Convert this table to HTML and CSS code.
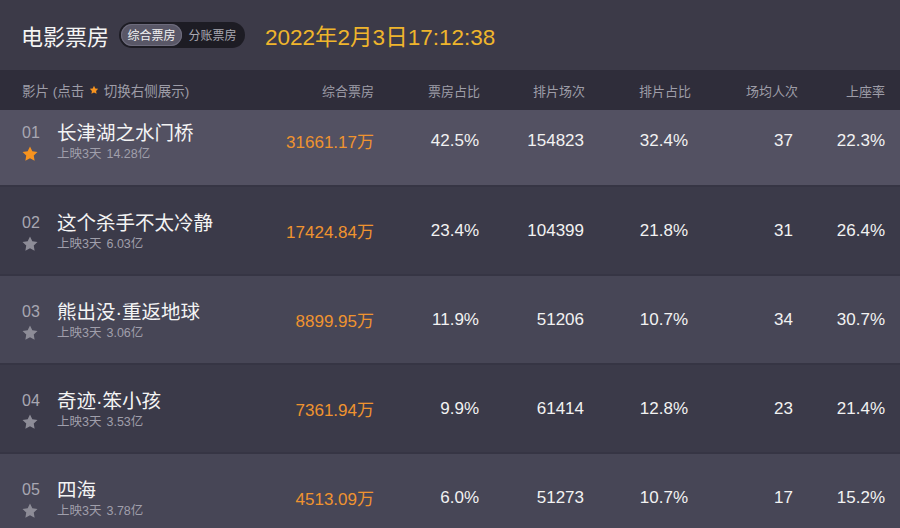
FILE: index.html
```html
<!DOCTYPE html>
<html lang="zh">
<head>
<meta charset="utf-8">
<link rel="stylesheet" href="styles.css">
</head>
<body>
<div class="page">
  <header class="top">
    <h1 class="title">电影票房</h1>
    <div class="toggle">
      <span class="seg active">综合票房</span>
      <span class="seg">分账票房</span>
    </div>
    <div class="date">2022年2月3日17:12:38</div>
  </header>

  <div class="thead grid">
    <div class="h-film">影片 (点击 <svg class="hstar" viewBox="0 0 24 24"><path d="M12 2l3.09 6.26L22 9.27l-5 4.87 1.18 6.88L12 17.77l-6.18 3.25L7 14.14 2 9.27l6.91-1.01z"/></svg> 切换右侧展示)</div>
    <div class="c">综合票房</div>
    <div class="c">票房占比</div>
    <div class="c">排片场次</div>
    <div class="c">排片占比</div>
    <div class="c">场均人次</div>
    <div class="c">上座率</div>
  </div>

  <div class="rows">
    <div class="row grid first">
      <div class="film">
        <div class="rank"><span class="no">01</span><svg class="star on" viewBox="0 0 24 24"><path d="M12 2l3.09 6.26L22 9.27l-5 4.87 1.18 6.88L12 17.77l-6.18 3.25L7 14.14 2 9.27l6.91-1.01z"/></svg></div>
        <div class="info"><div class="name">长津湖之水门桥</div><div class="sub"><span>上映3天</span><span>14.28亿</span></div></div>
      </div>
      <div class="v box">31661.17万</div>
      <div class="v">42.5%</div>
      <div class="v">154823</div>
      <div class="v">32.4%</div>
      <div class="v">37</div>
      <div class="v">22.3%</div>
    </div>
    <div class="row grid dark">
      <div class="film">
        <div class="rank"><span class="no">02</span><svg class="star" viewBox="0 0 24 24"><path d="M12 2l3.09 6.26L22 9.27l-5 4.87 1.18 6.88L12 17.77l-6.18 3.25L7 14.14 2 9.27l6.91-1.01z"/></svg></div>
        <div class="info"><div class="name">这个杀手不太冷静</div><div class="sub"><span>上映3天</span><span>6.03亿</span></div></div>
      </div>
      <div class="v box">17424.84万</div>
      <div class="v">23.4%</div>
      <div class="v">104399</div>
      <div class="v">21.8%</div>
      <div class="v">31</div>
      <div class="v">26.4%</div>
    </div>
    <div class="row grid light">
      <div class="film">
        <div class="rank"><span class="no">03</span><svg class="star" viewBox="0 0 24 24"><path d="M12 2l3.09 6.26L22 9.27l-5 4.87 1.18 6.88L12 17.77l-6.18 3.25L7 14.14 2 9.27l6.91-1.01z"/></svg></div>
        <div class="info"><div class="name">熊出没·重返地球</div><div class="sub"><span>上映3天</span><span>3.06亿</span></div></div>
      </div>
      <div class="v box">8899.95万</div>
      <div class="v">11.9%</div>
      <div class="v">51206</div>
      <div class="v">10.7%</div>
      <div class="v">34</div>
      <div class="v">30.7%</div>
    </div>
    <div class="row grid dark">
      <div class="film">
        <div class="rank"><span class="no">04</span><svg class="star" viewBox="0 0 24 24"><path d="M12 2l3.09 6.26L22 9.27l-5 4.87 1.18 6.88L12 17.77l-6.18 3.25L7 14.14 2 9.27l6.91-1.01z"/></svg></div>
        <div class="info"><div class="name">奇迹·笨小孩</div><div class="sub"><span>上映3天</span><span>3.53亿</span></div></div>
      </div>
      <div class="v box">7361.94万</div>
      <div class="v">9.9%</div>
      <div class="v">61414</div>
      <div class="v">12.8%</div>
      <div class="v">23</div>
      <div class="v">21.4%</div>
    </div>
    <div class="row grid light">
      <div class="film">
        <div class="rank"><span class="no">05</span><svg class="star" viewBox="0 0 24 24"><path d="M12 2l3.09 6.26L22 9.27l-5 4.87 1.18 6.88L12 17.77l-6.18 3.25L7 14.14 2 9.27l6.91-1.01z"/></svg></div>
        <div class="info"><div class="name">四海</div><div class="sub"><span>上映3天</span><span>3.78亿</span></div></div>
      </div>
      <div class="v box">4513.09万</div>
      <div class="v">6.0%</div>
      <div class="v">51273</div>
      <div class="v">10.7%</div>
      <div class="v">17</div>
      <div class="v">15.2%</div>
    </div>
  </div>
</div>
</body>
</html>
```

FILE: styles.css
```css
* { box-sizing: border-box; }
html, body {
  margin: 0;
  padding: 0;
  background: #3c3a48;
}
body {
  font-family: "Liberation Sans", "Noto Sans CJK SC", sans-serif;
  color: #f2f2f2;
  width: 900px;
  height: 528px;
  overflow: hidden;
}
.page { width: 900px; }

.top {
  height: 70px;
  display: flex;
  align-items: center;
  padding: 0 0 0 21px;
  background: #3c3a48;
}
.title {
  margin: 0;
  font-size: 22px;
  font-weight: normal;
  color: #f4f4f4;
  font-family: "Noto Sans CJK SC", sans-serif;
  line-height: 30px;
  margin-right: 10px;
}
.toggle {
  display: flex;
  align-items: center;
  height: 26px;
  padding: 2px;
  border-radius: 13px;
  background: #1d1c24;
  margin-right: 20px;
}
.seg {
  font-family: "Noto Sans CJK SC", sans-serif;
  font-size: 12px;
  line-height: 22px;
  height: 22px;
  padding: 0 6.5px;
  border-radius: 11px;
  color: #a9a8b2;
}
.seg.active {
  background: #595767;
  color: #f2f2f2;
  box-shadow: inset 0 0 0 1px #6d6b7c;
}
.date {
  font-size: 22.5px;
  color: #efb52c;
  font-family: "Liberation Sans", "Noto Sans CJK SC", sans-serif;
}

.grid {
  display: grid;
  grid-template-columns: 1fr 106px 106px 105px 106px 107px 87px;
  padding: 0 15px 0 22px;
  align-items: center;
}
.thead {
  height: 40px;
  background: #2f2d3a;
  color: #9e9da8;
  font-size: 13.5px;
  font-family: "Liberation Sans", "Noto Sans CJK SC", sans-serif;
}
.thead .c { text-align: right; font-size: 13px; }
.h-film { display: flex; align-items: center; white-space: pre; }
.hstar { width: 10px; height: 10px; fill: #f7931e; margin: 0 1px; }

.row {
  height: 89px;
  border-bottom: 2px solid #363544;
}
.row.first {
  height: 77px;
  padding-bottom: 14px;
  background: #535162;
}
.row.dark { background: #3b3a49; }
.row.light { background: #474656; }

.film { display: flex; align-items: flex-start; padding-top: 5px; }
.rank {
  width: 35px;
  display: flex;
  flex-direction: column;
  align-items: flex-start;
}
.no {
  font-size: 16px;
  line-height: 20px;
  color: #a8a7b2;
}
.star {
  width: 18px;
  height: 18px;
  margin-left: -1px;
  margin-top: 2px;
  fill: #8d8c97;
}
.star.on { fill: #f7931e; }
.info { display: flex; flex-direction: column; }
.name {
  font-family: "Liberation Sans", "Noto Sans CJK SC", sans-serif;
  font-size: 19.5px;
  line-height: 24px;
  color: #f4f4f4;
  margin-top: -2px;
}
.sub {
  font-size: 12.5px;
  line-height: 18px;
  color: #a09fab;
  display: flex;
  gap: 5px;
}

.v {
  text-align: right;
  font-size: 17px;
  color: #f2f2f2;
}
.v.box { color: #ef932f; }
.v:nth-child(3), .v:nth-child(4) { padding-right: 1px; }
.v:nth-child(5) { padding-right: 3px; }
.v:nth-child(6) { padding-right: 5px; }
```
